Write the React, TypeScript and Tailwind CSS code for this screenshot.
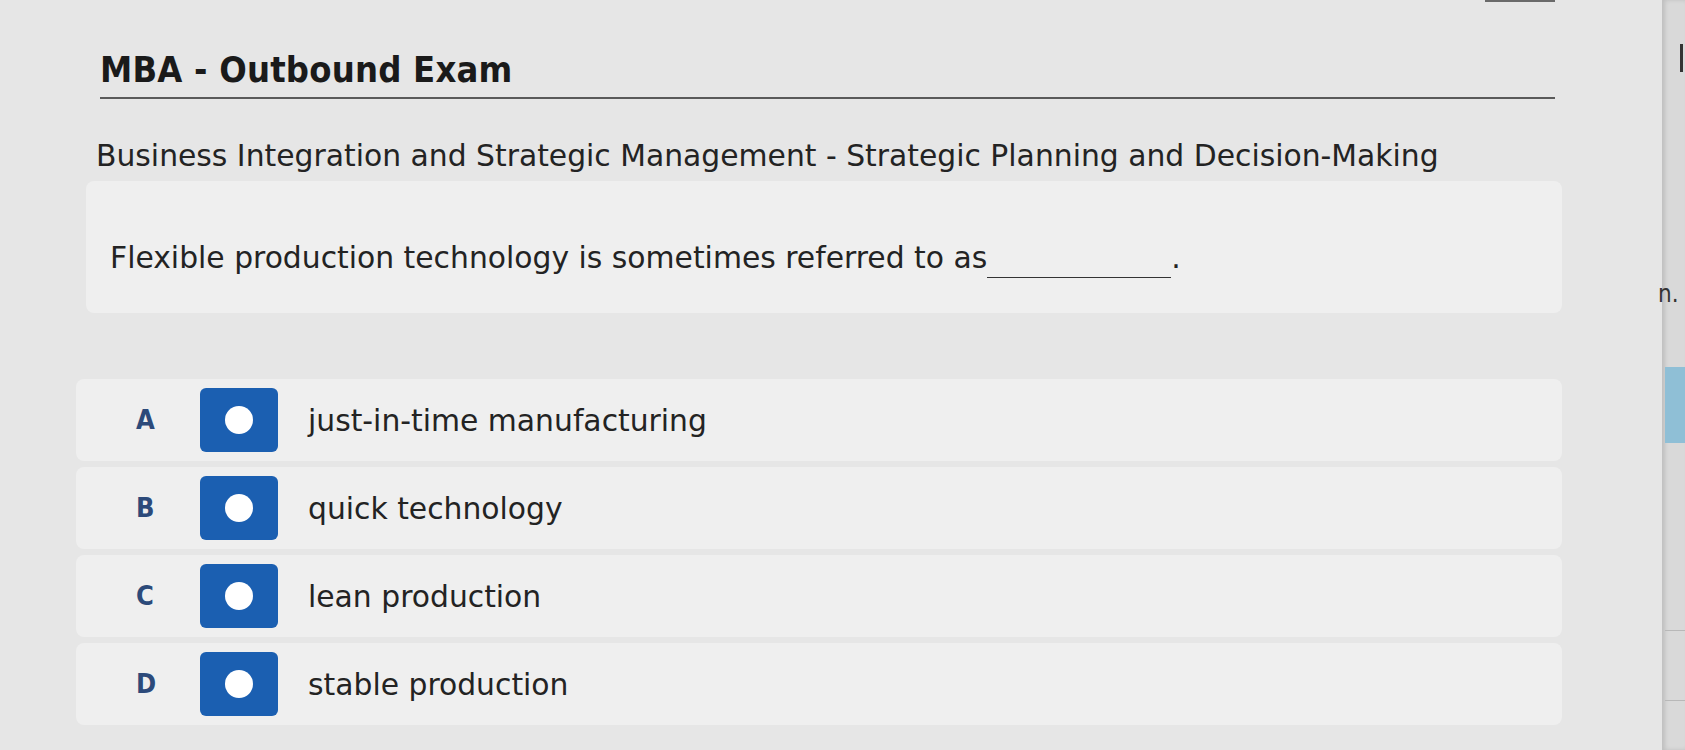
import React from "react";

const options = [
  { letter: "A", text: "just-in-time manufacturing" },
  { letter: "B", text: "quick technology" },
  { letter: "C", text: "lean production" },
  { letter: "D", text: "stable production" },
];

const body = { fontFamily: '"DejaVu Sans", Verdana, sans-serif' };

export default function App() {
  return (
    <div
      className="w-[1685px] h-[750px] overflow-hidden flex bg-[#e3e3e3] text-[#1e1e1e]"
      style={{ fontFamily: '"DejaVu Sans Condensed", "DejaVu Sans", Verdana, sans-serif' }}
    >
      <div className="relative w-[1662px] h-full flex flex-col bg-[#e6e6e6] pl-[78px] pr-[100px]">
        <div className="absolute left-[1485px] top-0 w-[70px] h-[2px] bg-[#6a6a6a]" />
        <h1 className="ml-[22px] mt-[52px] text-[36px] leading-[36px] font-bold text-[#1a1a1a] tracking-[0.2px]">
          MBA - Outbound Exam
        </h1>
        <div className="ml-[22px] mt-[9px] w-[1455px] h-[2px] bg-[#5a5a5a]" />
        <div className="ml-[18px] mt-[40px] text-[29.8px] leading-[34px] text-[#232323]" style={body}>
          Business Integration and Strategic Management - Strategic Planning and Decision-Making
        </div>
        <div className="ml-[8px] mt-[8px] h-[132px] w-[1476px] rounded-[8px] bg-[#efefef] flex items-center pl-[24px] pt-[22px]">
          <span className="text-[29.8px] leading-[34px] text-[#232323]" style={body}>
            Flexible production technology is sometimes referred to as
            <span className="inline-block w-[184px] border-b-[1.5px] border-[#333] translate-y-[2px]">&nbsp;</span>.
          </span>
        </div>
        <div className="mt-[66px] flex flex-col gap-[6px] w-[1486px] ml-[-2px]">
          {options.map((o) => (
            <div
              key={o.letter}
              className="h-[82px] rounded-[8px] bg-[#efefef] flex items-center pl-[60px]"
            >
              <span className="w-[20px] text-[27px] font-bold text-[#2c4a7a]">{o.letter}</span>
              <div className="ml-[44px] w-[78px] h-[64px] rounded-[6px] bg-[#1b5fb1] flex items-center justify-center">
                <div className="w-[28px] h-[28px] rounded-full bg-white" />
              </div>
              <span className="ml-[30px] text-[29.8px] leading-[34px] text-[#232323] pt-[2px]" style={body}>
                {o.text}
              </span>
            </div>
          ))}
        </div>
      </div>
      <div className="relative flex-1 h-full bg-[#d9d9d9] shadow-[inset_3px_0_4px_rgba(0,0,0,0.12)]">
        <div className="absolute left-[18px] top-[44px] w-[3px] h-[28px] bg-[#333]" />
        <span className="absolute left-[-4px] top-[276px] text-[24px] text-[#333]">n.</span>
        <div className="absolute left-[3px] top-[367px] right-0 h-[76px] bg-[#8fbfd6]" />
        <div className="absolute left-[3px] top-[630px] right-0 h-[1px] bg-[#b8b8b8]" />
        <div className="absolute left-[3px] top-[700px] right-0 h-[1px] bg-[#b8b8b8]" />
      </div>
    </div>
  );
}
